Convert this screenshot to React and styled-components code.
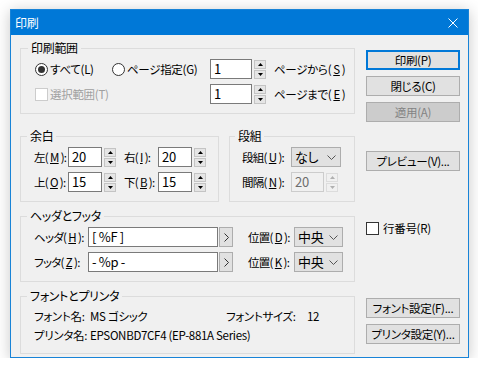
import React from 'react';
import styled, { createGlobalStyle } from 'styled-components';

const GlobalStyle = createGlobalStyle`
  html, body {
    margin: 0;
    background: #ffffff;
  }
  body {
    font-family: "Noto Sans CJK JP", "Noto Sans", sans-serif;
    font-size: 11.5px;
    font-feature-settings: "palt";
    letter-spacing: -0.3px;
    color: #000;
  }
`;

const Window = styled.div`
  box-sizing: border-box;
  width: 459px;
  height: 349px;
  margin: 9px 0 0 10px;
  border: 1px solid #1883d7;
  background: #f0f0f0;
  box-shadow: 0 2px 14px rgba(0, 0, 0, 0.22);
  display: flex;
  flex-direction: column;
`;

const TitleBar = styled.div`
  height: 25px;
  background: #0078d7;
  color: #fff;
  display: flex;
  align-items: center;
  justify-content: space-between;
  padding: 0 10px 0 4px;
  font-size: 12px;
  line-height: 14px;
`;

const Client = styled.div`
  display: grid;
  grid-template-columns: 335px 94px;
  column-gap: 11px;
  row-gap: 7px;
  padding: 6px 8px 0 9px;
`;

const Group = styled.fieldset`
  box-sizing: border-box;
  margin: 0;
  min-width: 0;
  height: ${(p) => p.$h || 73}px;
  width: ${(p) => (p.$w ? `${p.$w}px` : 'auto')};
  border: 1px solid #dcdcdc;
  padding: ${(p) => p.$pt || 4}px 6px 0 ${(p) => p.$pl || 14}px;
  display: flex;
  flex-direction: column;
  gap: ${(p) => p.$gap ?? 5}px;
`;

const Legend = styled.legend`
  padding: 0 3px;
  margin-left: -7px;
  line-height: 14px;
  font-size: 12px;
`;

const SplitRow = styled.div`
  display: flex;
  gap: 10px;
`;

const Row = styled.div`
  display: flex;
  align-items: center;
  height: ${(p) => p.$h || 20}px;
`;

const Label = styled.span`
  width: ${(p) => p.$w}px;
  flex: none;
  white-space: nowrap;
  letter-spacing: ${(p) => (p.$tight ? '-0.7px' : '-0.3px')};
  color: ${(p) => (p.$disabled ? '#a0a0a0' : '#000')};
  display: flex;
  align-items: center;
  gap: 2px;
  u {
    text-decoration: underline;
    text-underline-offset: 1px;
  }
`;

const Radio = styled.span`
  box-sizing: border-box;
  width: 13px;
  height: 13px;
  border: 1px solid #333;
  border-radius: 50%;
  background: #fff;
  display: inline-flex;
  align-items: center;
  justify-content: center;
  &::after {
    content: '';
    width: 7px;
    height: 7px;
    border-radius: 50%;
    background: ${(p) => (p.$checked ? '#333' : 'transparent')};
  }
`;

const Check = styled.span`
  box-sizing: border-box;
  width: 13px;
  height: 13px;
  border: 1px solid ${(p) => (p.$disabled ? '#cccccc' : '#333')};
  background: #fff;
  flex: none;
`;

const TextBox = styled.div`
  box-sizing: border-box;
  width: ${(p) => p.$w}px;
  height: 20px;
  flex: none;
  border: 1px solid ${(p) => (p.$disabled ? '#cccccc' : '#7a7a7a')};
  background: ${(p) => (p.$disabled ? '#f0f0f0' : '#fff')};
  color: ${(p) => (p.$disabled ? '#6d6d6d' : '#000')};
  font-size: 13px;
  line-height: 18px;
  padding-left: 3px;
  white-space: pre;
`;

const Spin = styled.div`
  display: flex;
  flex-direction: column;
  gap: 1px;
  margin-left: 2px;
  margin-right: ${(p) => p.$mr || 0}px;
  flex: none;
`;

const SpinHalf = styled.div`
  box-sizing: border-box;
  width: 12px;
  height: 9px;
  background: ${(p) => (p.$disabled ? '#f0f0f0' : '#e5e5e5')};
  border: 1px solid ${(p) => (p.$disabled ? '#dcdcdc' : '#c4c4c4')};
  display: flex;
  align-items: center;
  justify-content: center;
`;

const Select = styled.div`
  box-sizing: border-box;
  width: ${(p) => p.$w}px;
  height: 20px;
  flex: none;
  border: 1px solid #adadad;
  background: #e1e1e1;
  font-size: 13px;
  line-height: 18px;
  padding: 0 4px 0 3px;
  display: flex;
  align-items: center;
  justify-content: space-between;
`;

const ArrowBtn = styled.div`
  box-sizing: border-box;
  width: 14px;
  height: 20px;
  flex: none;
  margin-left: 1px;
  margin-right: 15px;
  border: 1px solid #adadad;
  background: #e1e1e1;
  display: flex;
  align-items: center;
  justify-content: center;
`;

const Side = styled.div`
  display: flex;
  flex-direction: column;
  gap: 6px;
  padding-top: ${(p) => p.$pt || 0}px;
`;

const Button = styled.div`
  box-sizing: border-box;
  height: 20px;
  border: ${(p) => (p.$default ? '2px solid #0078d7' : '1px solid #adadad')};
  background: ${(p) => (p.$disabled ? '#cccccc' : '#e1e1e1')};
  color: ${(p) => (p.$disabled ? '#838383' : '#000')};
  display: flex;
  align-items: center;
  justify-content: center;
  line-height: 14px;
  white-space: nowrap;
`;

const CheckLine = styled.div`
  align-self: start;
  display: flex;
  align-items: center;
  gap: 4px;
  margin-top: 12px;
  line-height: 14px;
`;

const InfoRow = styled.div`
  display: flex;
  align-items: center;
  height: 16px;
`;

const Info = styled.span`
  width: ${(p) => (p.$w ? `${p.$w}px` : 'auto')};
  flex: none;
  white-space: nowrap;
`;

function Tri({ up, disabled }) {
  return (
    <svg width="5" height="3" viewBox="0 0 5 3">
      <polygon
        points={up ? '0,3 5,3 2.5,0' : '0,0 5,0 2.5,3'}
        fill={disabled ? '#b0b0b0' : '#000'}
      />
    </svg>
  );
}

function Spinner({ disabled, mr }) {
  return (
    <Spin $mr={mr}>
      <SpinHalf $disabled={disabled}><Tri up disabled={disabled} /></SpinHalf>
      <SpinHalf $disabled={disabled}><Tri disabled={disabled} /></SpinHalf>
    </Spin>
  );
}

function Chevron() {
  return (
    <svg width="9" height="5" viewBox="0 0 9 5">
      <polyline points="0.5,0.5 4.5,4.5 8.5,0.5" fill="none" stroke="#555" strokeWidth="1" />
    </svg>
  );
}

function ChevronRight() {
  return (
    <svg width="5" height="9" viewBox="0 0 5 9">
      <polyline points="0.5,0.5 4.5,4.5 0.5,8.5" fill="none" stroke="#333" strokeWidth="1" />
    </svg>
  );
}

export default function App() {
  return (
    <>
      <GlobalStyle />
      <Window>
        <TitleBar>
          <span>印刷</span>
          <svg width="10" height="10" viewBox="0 0 10 10">
            <path d="M0.5,0.5 L9.5,9.5 M9.5,0.5 L0.5,9.5" stroke="#fff" strokeWidth="1" />
          </svg>
        </TitleBar>
        <Client>
          <Group $pl={14}>
            <Legend>印刷範囲</Legend>
            <Row>
              <Label $w={77}><Radio $checked />すべて(L)</Label>
              <Label $w={98}><Radio />ページ指定(G)</Label>
              <TextBox $w={42}>1</TextBox>
              <Spinner mr={8} />
              <Label $w={80}>ページから(<u>S</u>)</Label>
            </Row>
            <Row>
              <Label $w={175} $disabled><Check $disabled />選択範囲(T)</Label>
              <TextBox $w={42}>1</TextBox>
              <Spinner mr={8} />
              <Label $w={80}>ページまで(<u>E</u>)</Label>
            </Row>
          </Group>
          <Side $pt={9}>
            <Button $default>印刷(P)</Button>
            <Button>閉じる(C)</Button>
            <Button $disabled>適用(A)</Button>
          </Side>

          <SplitRow>
            <Group $w={199} $pl={13}>
              <Legend>余白</Legend>
              <Row>
                <Label $w={34} $tight>左(<u>M</u>):</Label>
                <TextBox $w={34}>20</TextBox>
                <Spinner mr={8} />
                <Label $w={34} $tight>右(<u>I</u>):</Label>
                <TextBox $w={34}>20</TextBox>
                <Spinner />
              </Row>
              <Row>
                <Label $w={34} $tight>上(<u>O</u>):</Label>
                <TextBox $w={34}>15</TextBox>
                <Spinner mr={8} />
                <Label $w={34} $tight>下(<u>B</u>):</Label>
                <TextBox $w={34}>15</TextBox>
                <Spinner />
              </Row>
            </Group>
            <Group $w={126} $pl={12}>
              <Legend>段組</Legend>
              <Row>
                <Label $w={49} $tight>段組(<u>U</u>):</Label>
                <Select $w={50}>なし<Chevron /></Select>
              </Row>
              <Row>
                <Label $w={49} $tight>間隔(<u>N</u>):</Label>
                <TextBox $w={33} $disabled>20</TextBox>
                <Spinner disabled />
              </Row>
            </Group>
          </SplitRow>
          <Side $pt={22}>
            <Button>プレビュー(V)...</Button>
          </Side>

          <Group $pl={13}>
            <Legend>ヘッダとフッタ</Legend>
            <Row>
              <Label $w={54} $tight>ヘッダ(<u>H</u>):</Label>
              <TextBox $w={130}>[ %F ]</TextBox>
              <ArrowBtn><ChevronRight /></ArrowBtn>
              <Label $w={46} $tight>位置(<u>D</u>):</Label>
              <Select $w={49}>中央<Chevron /></Select>
            </Row>
            <Row>
              <Label $w={54} $tight>フッタ(<u>Z</u>):</Label>
              <TextBox $w={130}>- %p -</TextBox>
              <ArrowBtn><ChevronRight /></ArrowBtn>
              <Label $w={46} $tight>位置(<u>K</u>):</Label>
              <Select $w={49}>中央<Chevron /></Select>
            </Row>
          </Group>
          <CheckLine>
            <Check />行番号(R)
          </CheckLine>

          <Group $h={65} $pl={13} $pt={5} $gap={3}>
            <Legend>フォントとプリンタ</Legend>
            <InfoRow>
              <Info $w={56}>フォント名:</Info>
              <Info $w={136}>MS ゴシック</Info>
              <Info $w={81}>フォントサイズ:</Info>
              <Info>12</Info>
            </InfoRow>
            <InfoRow>
              <Info $w={56}>プリンタ名:</Info>
              <Info>EPSONBD7CF4 (EP-881A Series)</Info>
            </InfoRow>
          </Group>
          <Side $pt={9}>
            <Button>フォント設定(F)...</Button>
            <Button>プリンタ設定(Y)...</Button>
          </Side>
        </Client>
      </Window>
    </>
  );
}
